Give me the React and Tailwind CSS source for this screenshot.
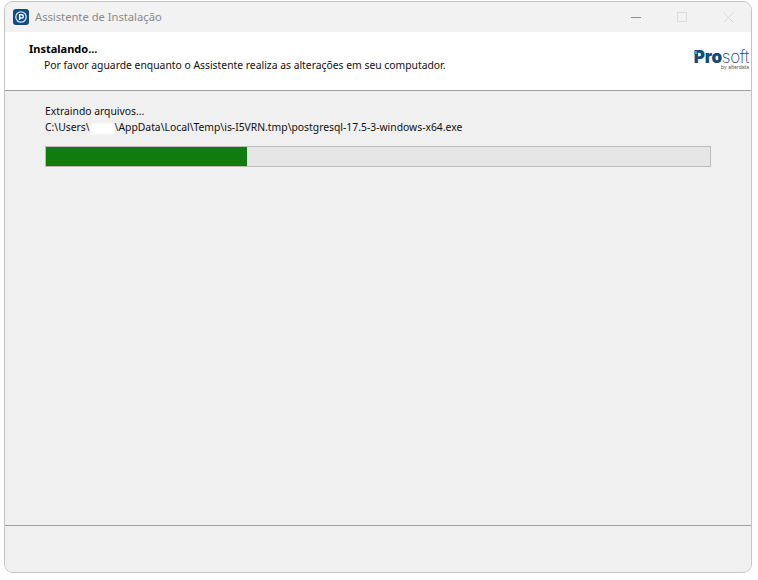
import React from "react";

function AppIcon() {
    return (
        <svg width="16" height="16" viewBox="0 0 16 16" className="shrink-0">
            <rect x="0" y="0" width="16" height="16" rx="3" fill="#124a85" />
            <circle cx="8" cy="8" r="5.2" fill="none" stroke="#dbe6f2" strokeWidth="1.3" />
            <path d="M6.6 11V5.8h2.2a1.5 1.5 0 0 1 0 3.2H6.8" fill="none" stroke="#ffffff" strokeWidth="1.4" />
        </svg>
    );
}

function WindowButtons() {
    return (
        <div className="flex items-center">
            <div className="w-[46px] flex justify-center">
                <div className="w-[10px] h-px bg-[#8f8f8f]"></div>
            </div>
            <div className="w-[46px] flex justify-center">
                <div className="w-[10px] h-[10px] border border-[#dcdcdc]"></div>
            </div>
            <div className="w-[46px] flex justify-center">
                <svg width="11" height="11" viewBox="0 0 11 11">
                    <path d="M0.5 0.5L10.5 10.5M10.5 0.5L0.5 10.5" stroke="#d8d8d8" strokeWidth="1" />
                </svg>
            </div>
        </div>
    );
}

function Logo() {
    return (
        <div className="relative flex flex-col items-end font-['Inter',sans-serif]">
            <div className="flex items-baseline h-[13px] text-[17px] leading-[13px] text-[#124a78]">
                <span className="font-black tracking-[-0.2px]">Pro</span>
                <span className="font-extralight tracking-[-0.3px]">soft</span>
            </div>
            <div className="mt-[1px] text-[5px] leading-[5px] text-[#555555]">by alterdata</div>
            <div className="absolute left-0 top-0 w-[3px] h-[3px] bg-[#3aa6d8]"></div>
        </div>
    );
}

export default function App() {
    const progress = 30.2;

    return (
        <div className="w-[758px] h-[580px] bg-white pt-px pl-1 text-[10.35px] text-[#111111] font-['Noto_Sans',sans-serif]">
            <div className="w-[748px] h-[572px] flex flex-col overflow-hidden rounded-[9px] border border-[#c4c4c4] bg-[#f0f0f0]">
                <div className="h-[30px] shrink-0 flex items-center justify-between bg-[#f2f2f2] pl-[8px]">
                    <div className="flex items-center gap-[6px]">
                        <AppIcon />
                        <span className="text-[11.2px] text-[#8a8a8a]">Assistente de Instalação</span>
                    </div>
                    <WindowButtons />
                </div>

                <div className="h-[59px] shrink-0 flex justify-between bg-white border-b border-[#a0a0a0] pl-[24px] pr-[2px] pt-[10px]">
                    <div>
                        <div className="font-bold text-[11px] leading-[14px] text-black">Instalando...</div>
                        <div className="pl-[15px] pt-[2px] leading-[14px]">Por favor aguarde enquanto o Assistente realiza as alterações em seu computador.</div>
                    </div>
                    <div className="pt-[9px]">
                        <Logo />
                    </div>
                </div>

                <div className="flex-1 flex flex-col px-[40px] pt-[12px]">
                    <div className="leading-[16px]">Extraindo arquivos...</div>
                    <div className="leading-[16px] whitespace-nowrap">
                        C:\Users\<span className="inline-block w-[25px] h-[11px] align-middle bg-white rounded-[5px] blur-[1px]"></span>\AppData\Local\Temp\is-I5VRN.tmp\postgresql-17.5-3-windows-x64.exe
                    </div>
                    <div className="mt-[11px] h-[21px] border border-[#bcbcbc] bg-[#e6e6e6]">
                        <div className="h-full bg-[#107c10]" style={{ width: `${progress}%` }}></div>
                    </div>
                </div>

                <div className="h-[47px] shrink-0 border-t border-[#a0a0a0] bg-[#f0f0f0]"></div>
            </div>
        </div>
    );
}
